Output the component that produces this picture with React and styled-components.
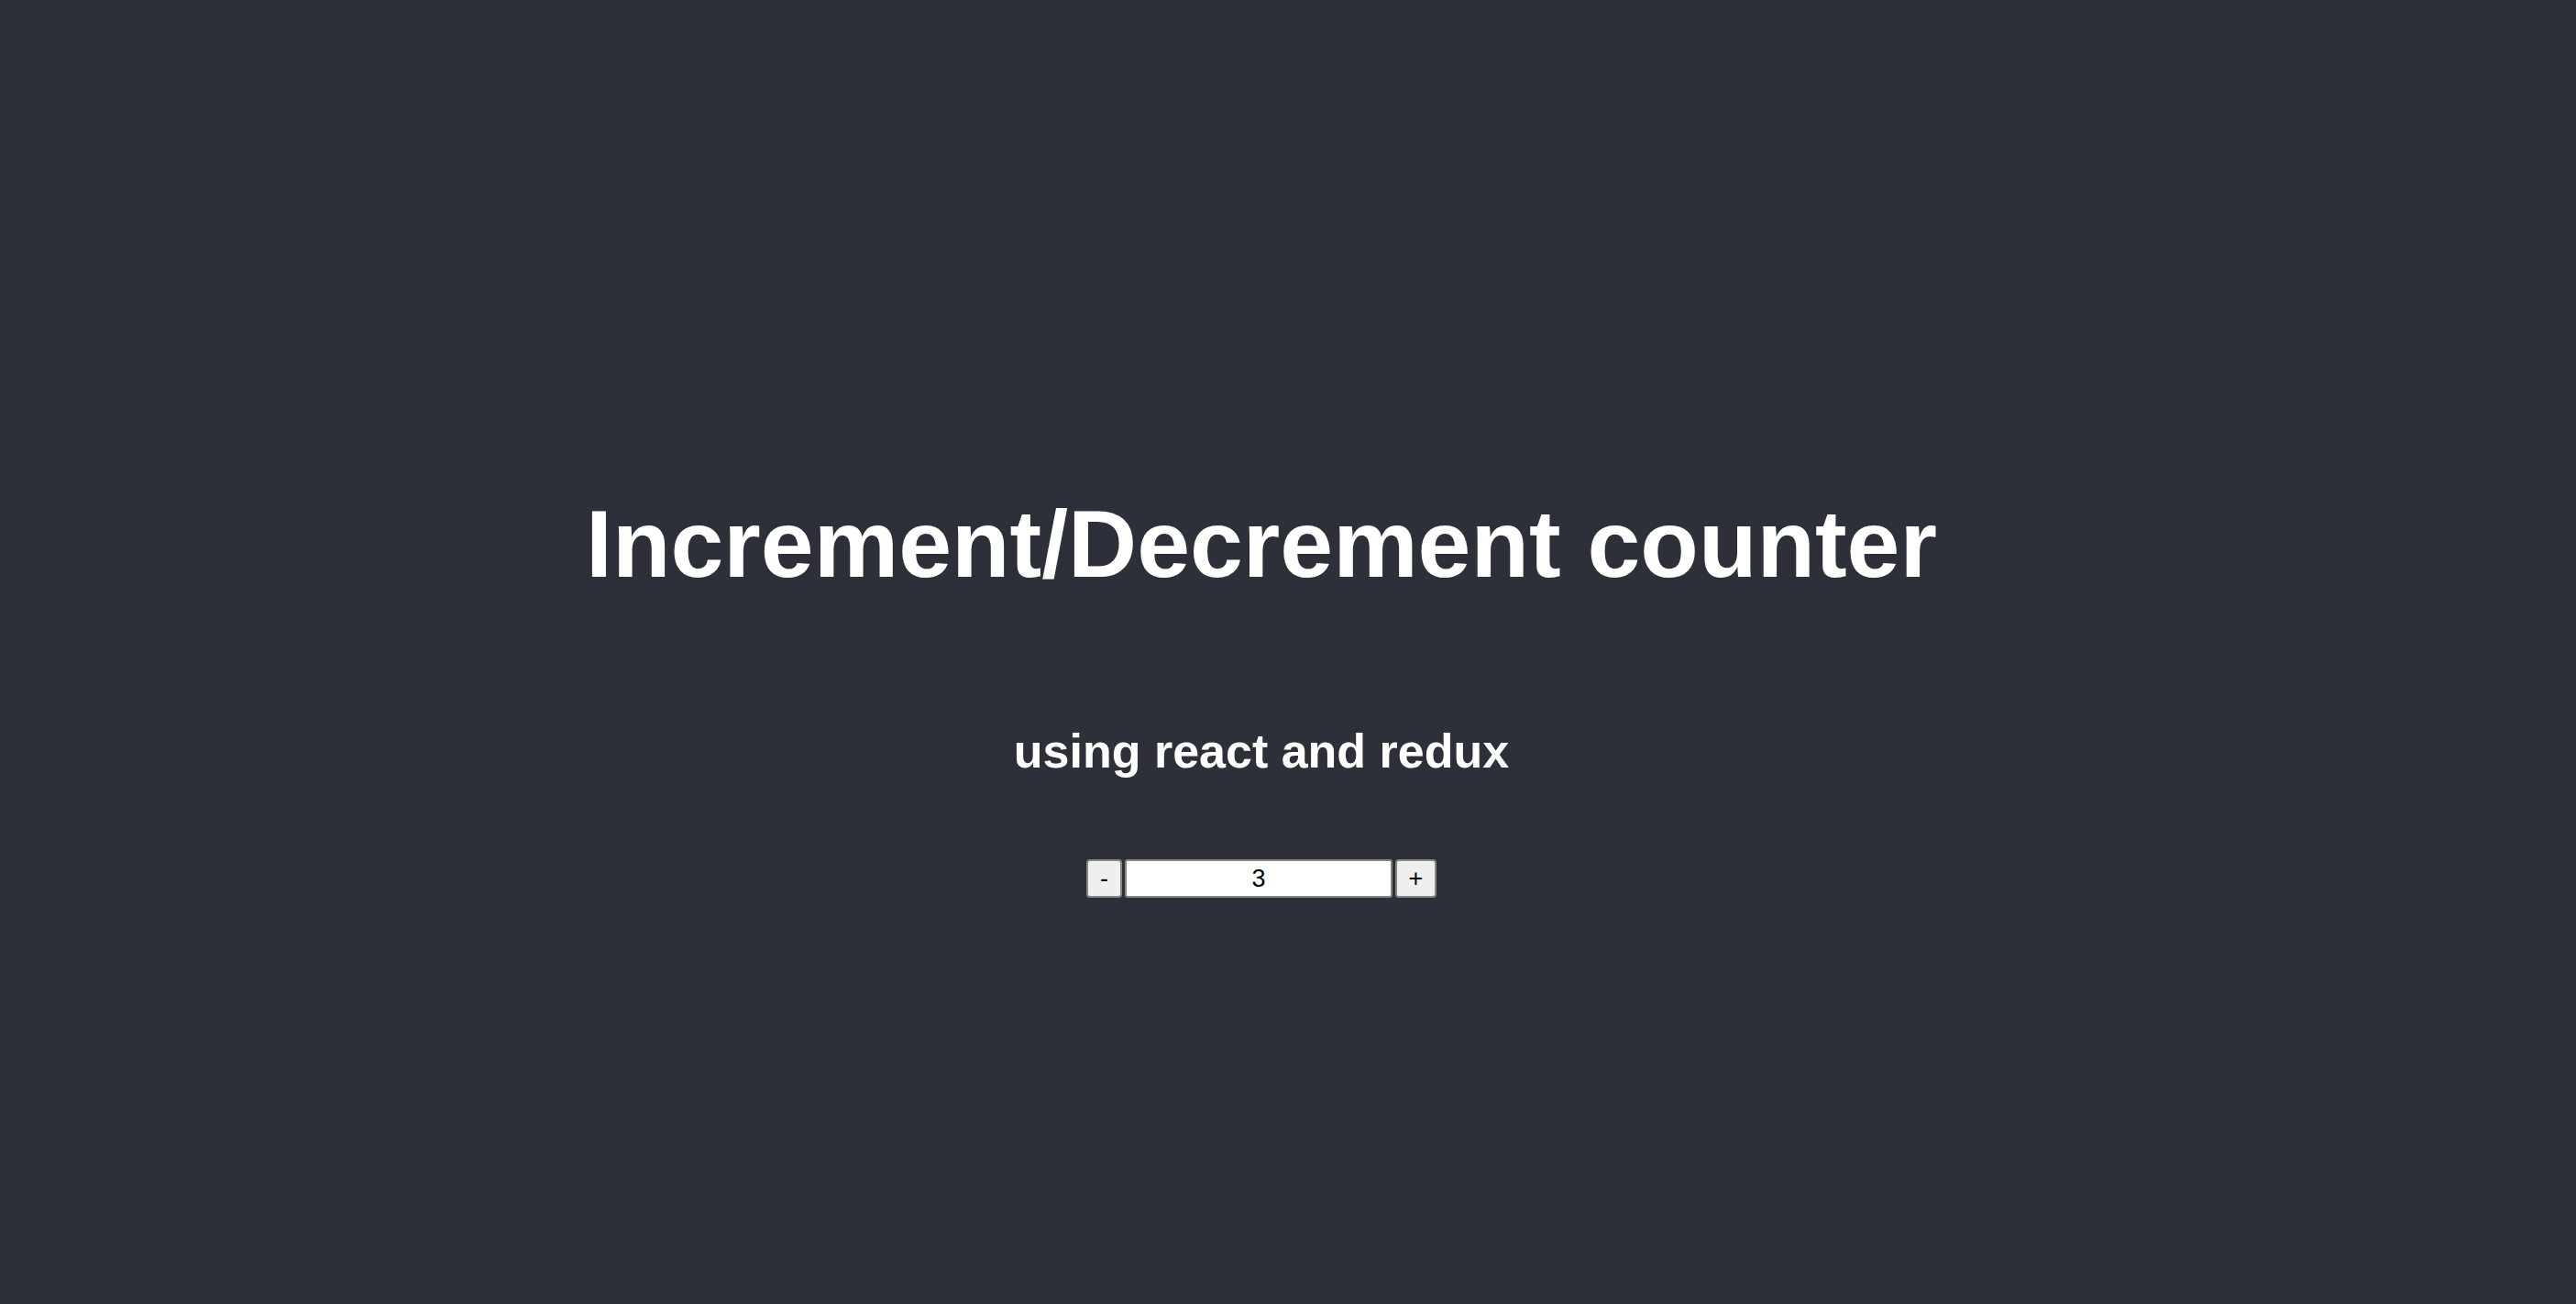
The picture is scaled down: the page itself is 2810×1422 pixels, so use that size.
import React, { useState } from "react";
import styled, { createGlobalStyle } from "styled-components";

const GlobalStyle = createGlobalStyle`
  html, body {
    margin: 0;
    padding: 0;
    background: #2e3039;
  }
`;

const Page = styled.div`
  box-sizing: border-box;
  min-height: 100vh;
  padding: 541px 58px 0 0;
  background: #2e3039;
  color: #fff;
  font-family: "Liberation Sans", Arial, Helvetica, sans-serif;
  text-align: center;
`;

const Title = styled.h1`
  margin: 0;
  font-size: 104px;
  line-height: 1;
  font-weight: 700;
`;

const Subtitle = styled.h3`
  margin: 148px 0 0;
  font-size: 52px;
  line-height: 1;
  font-weight: 700;
`;

const Counter = styled.div`
  display: flex;
  justify-content: center;
  gap: 3px;
  margin-top: 92px;
`;

const StepButton = styled.button`
  box-sizing: border-box;
  width: ${p => p.wide ? 45 : 39}px;
  height: 42px;
  padding: 0;
  background: #efefef;
  border: 2px solid #858585;
  border-radius: 4px;
  color: #000;
  font-family: "Liberation Sans", Arial, sans-serif;
  font-size: 27px;
  line-height: 1;
  cursor: pointer;
`;

const Value = styled.input`
  box-sizing: border-box;
  width: 292px;
  height: 42px;
  padding: 0 4px;
  background: #fff;
  border: 2px solid #858585;
  border-radius: 3px;
  color: #000;
  font-family: "Liberation Sans", Arial, sans-serif;
  font-size: 27px;
  text-align: center;
  outline: none;
`;

export default function App() {
  const [count, setCount] = useState(3);
  return (
    <Page>
      <GlobalStyle />
      <Title>Increment/Decrement counter</Title>
      <Subtitle>using react and redux</Subtitle>
      <Counter>
        <StepButton onClick={() => setCount(count - 1)}>-</StepButton>
        <Value value={count} readOnly />
        <StepButton wide onClick={() => setCount(count + 1)}>+</StepButton>
      </Counter>
    </Page>
  );
}
